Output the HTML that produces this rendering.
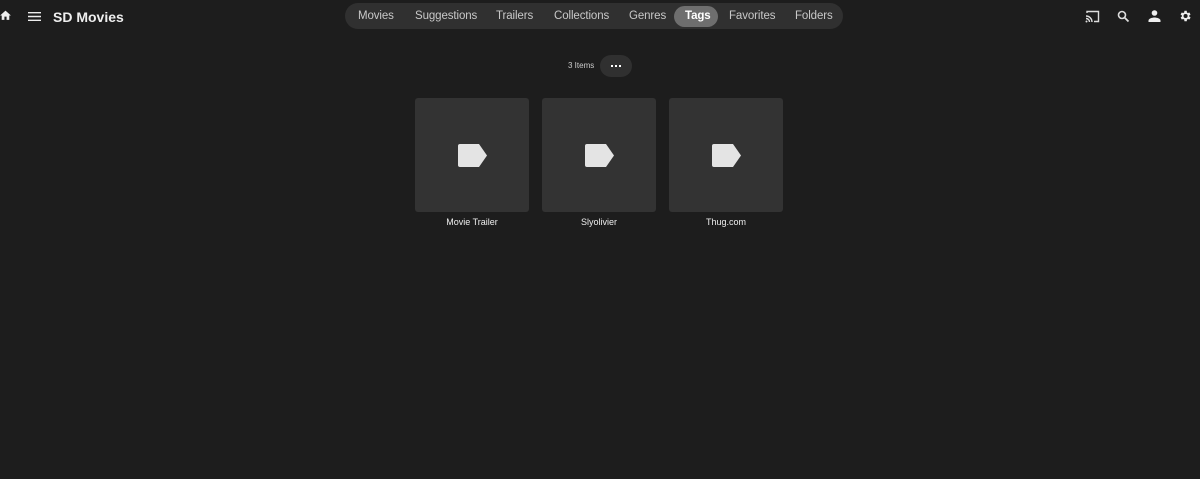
<!DOCTYPE html>
<html><head><style>
body{margin:0;width:1200px;height:479px;background:#1d1d1d;font-family:"Liberation Sans",sans-serif;color:#fff;position:relative;overflow:hidden}
.a{position:absolute;white-space:nowrap}
.nav{position:absolute;left:345px;top:3px;width:498px;height:26px;border-radius:13px;background:#303030}
.t{position:absolute;top:10px;font-size:11.5px;color:#c8c8c8;letter-spacing:-.1px}
.card{position:absolute;top:98px;width:114px;height:114px;background:#333;border-radius:3px}
.lbl{position:absolute;top:217px;width:114px;text-align:center;font-size:9px;color:#eee}
</style></head><body>
<svg class="a" style="left:-1px;top:9px" width="13" height="13" viewBox="0 0 24 24"><path fill="#eee" d="M10 20v-6h4v6h5v-8h3L12 3 2 12h3v8z"/></svg>
<svg class="a" style="left:28px;top:11px" width="13" height="11" viewBox="0 0 13 11"><path fill="#eee" d="M0 1h13v1.4H0zM0 4.8h13v1.4H0zM0 8.6h13V10H0z"/></svg>
<div class="a" style="left:53px;top:9px;font-size:14px;color:#eee;font-weight:bold">SD Movies</div>
<div class="nav"></div>
<div class="a" style="left:674px;top:6px;width:44px;height:21px;border-radius:11px;background:#6e6e6e"></div>
<div class="t" style="left:358px">Movies</div>
<div class="t" style="left:415px">Suggestions</div>
<div class="t" style="left:496px">Trailers</div>
<div class="t" style="left:554px">Collections</div>
<div class="t" style="left:629px">Genres</div>
<div class="t" style="left:685px;color:#fff;font-weight:bold">Tags</div>
<div class="t" style="left:729px">Favorites</div>
<div class="t" style="left:795px">Folders</div>
<svg class="a" style="left:1085px;top:10px" width="15" height="13" viewBox="0 0 15 13"><path fill="none" stroke="#ddd" stroke-width="1.4" d="M2 3V1.5h11.5v10H9M1 6a6 6 0 0 1 6 6M1 8.5a3.5 3.5 0 0 1 3.5 3.5"/><circle cx="1.5" cy="11.5" r="1" fill="#ddd"/></svg>
<svg class="a" style="left:1117px;top:10px" width="13" height="13" viewBox="0 0 13 13"><circle cx="5" cy="5" r="3.5" fill="none" stroke="#ddd" stroke-width="1.6"/><path d="M7.5 7.5l4 4" stroke="#ddd" stroke-width="1.8"/></svg>
<svg class="a" style="left:1148px;top:10px" width="13" height="12" viewBox="0 0 13 12"><circle cx="6.5" cy="3" r="2.8" fill="#eee"/><path fill="#eee" d="M0.5 12v-1.5c0-2 4-3 6-3s6 1 6 3V12z"/></svg>
<svg class="a" style="left:1178px;top:9px" width="14" height="14" viewBox="0 0 24 24"><path fill="#eee" d="M19.4 13a7.5 7.5 0 0 0 0-2l2.1-1.6-2-3.5-2.5 1a7 7 0 0 0-1.7-1L15 3h-4l-.4 2.9a7 7 0 0 0-1.7 1l-2.5-1-2 3.5L6.6 11a7.5 7.5 0 0 0 0 2l-2.1 1.6 2 3.5 2.5-1a7 7 0 0 0 1.7 1L11 21h4l.4-2.9a7 7 0 0 0 1.7-1l2.5 1 2-3.5zM13 15.5a3.5 3.5 0 1 1 0-7 3.5 3.5 0 0 1 0 7z"/></svg>
<div class="a" style="left:568px;top:61px;font-size:8px;color:#ccc">3 Items</div>
<div class="a" style="left:600px;top:55px;width:32px;height:22px;border-radius:11px;background:#303030"></div>
<div class="a" style="left:611px;top:65px;width:10px;height:2px;background:repeating-linear-gradient(90deg,#fff 0 2px,transparent 2px 4px)"></div>
<div class="card" style="left:415px"></div><div class="card" style="left:542px"></div><div class="card" style="left:669px"></div>
<svg class="a" style="left:458px;top:144px" width="30" height="23" viewBox="0 0 30 23"><path fill="#e4e4e4" d="M2 0h19l8 11.5-8 11.5H2a2 2 0 0 1-2-2V2a2 2 0 0 1 2-2z"/></svg>
<svg class="a" style="left:585px;top:144px" width="30" height="23" viewBox="0 0 30 23"><path fill="#e4e4e4" d="M2 0h19l8 11.5-8 11.5H2a2 2 0 0 1-2-2V2a2 2 0 0 1 2-2z"/></svg>
<svg class="a" style="left:712px;top:144px" width="30" height="23" viewBox="0 0 30 23"><path fill="#e4e4e4" d="M2 0h19l8 11.5-8 11.5H2a2 2 0 0 1-2-2V2a2 2 0 0 1 2-2z"/></svg>
<div class="lbl" style="left:415px">Movie Trailer</div>
<div class="lbl" style="left:542px">Slyolivier</div>
<div class="lbl" style="left:669px">Thug.com</div>
</body></html>
